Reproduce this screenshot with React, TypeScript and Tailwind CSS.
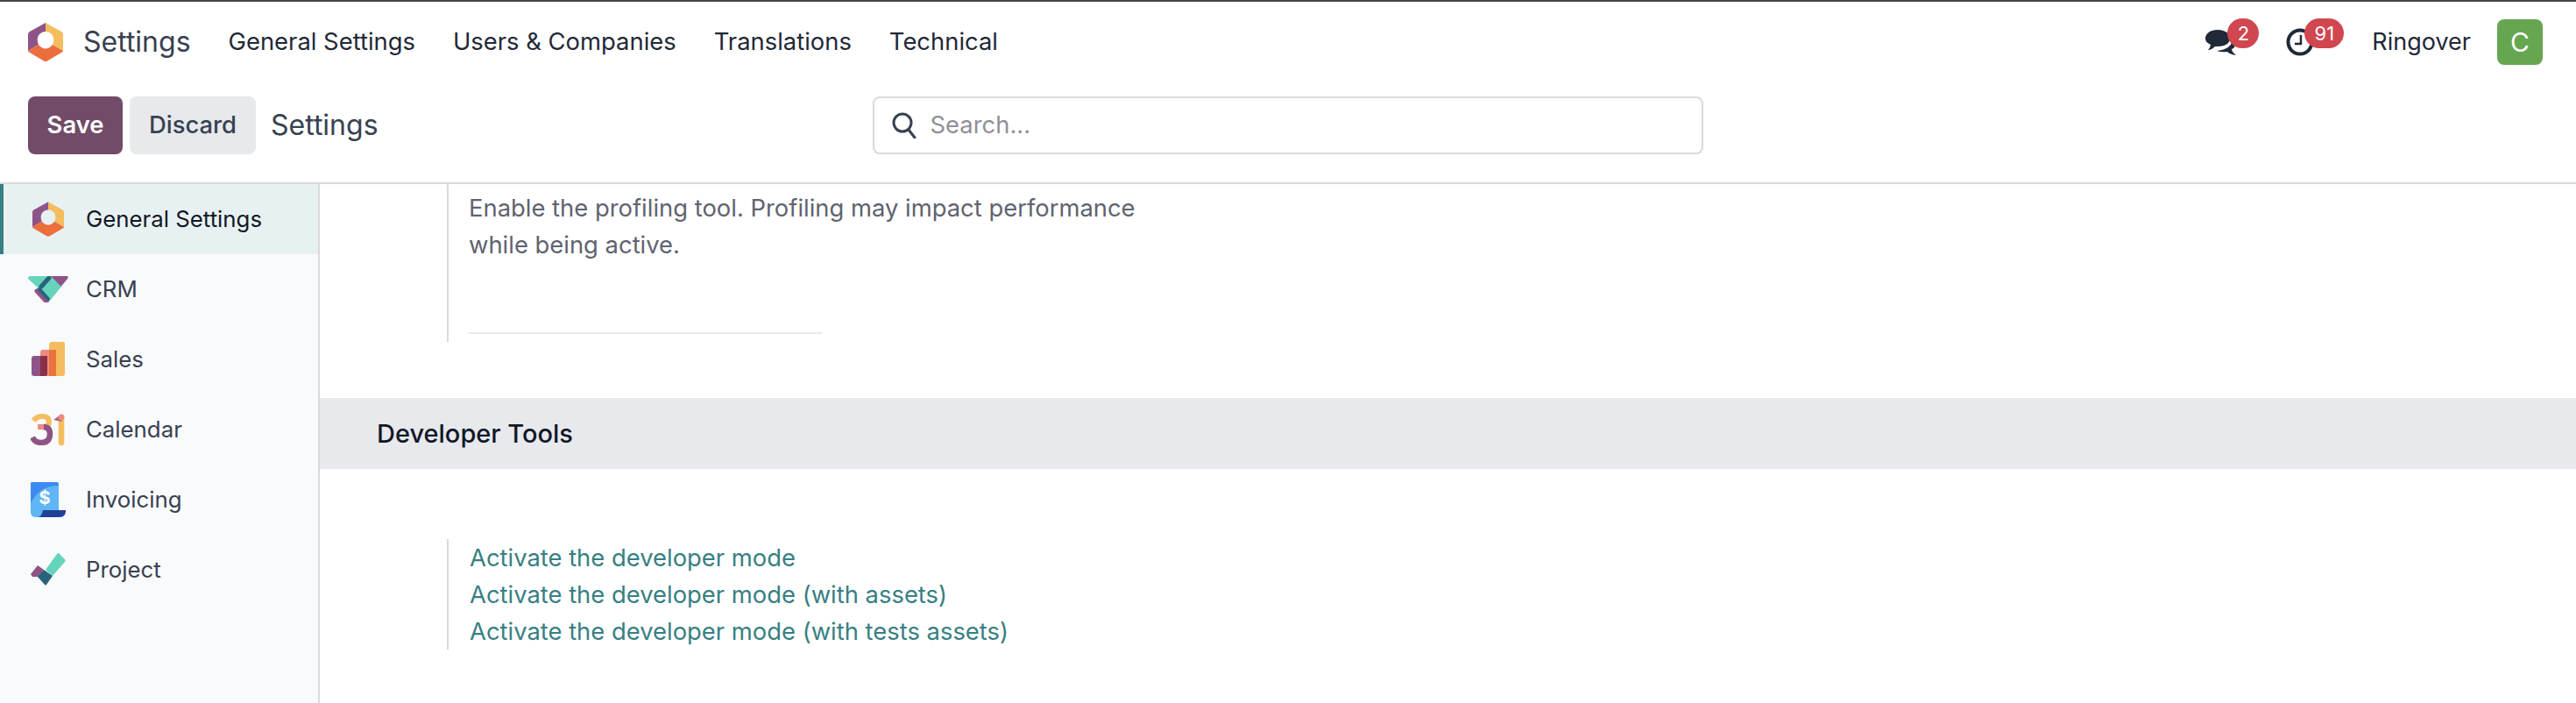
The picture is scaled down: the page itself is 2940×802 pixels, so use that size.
const navLinks = ['General Settings', 'Users & Companies', 'Translations', 'Technical'];

function SettingsIcon({ className }: { className: string }) {
  return (
    <svg viewBox="0 0 40 44" className={className}>
      <path d="M20 0 L2 10 Q0 11 0 13 V32 L12 25 Q9 18 13 13 Q16 10 20 10 Z" fill="#8f5487" />
      <path d="M20 0 L38 10 Q40 11 40 13 V32 L28 25 Q31 18 27 13 Q24 10 20 10 Z" fill="#f4bd5f" />
      <path d="M0 32 L12 25 Q20 34 28 25 L40 32 Q40 33 38 34 L22 43.5 Q20 44.5 18 43.5 L2 34 Q0 33 0 32 Z" fill="#eb6e3c" />
    </svg>
  );
}

function CrmIcon() {
  return (
    <svg viewBox="0 0 46 30" className="w-[46px] h-[30px]">
      <path d="M25 0 H44 Q47 0 45 3 L36 14 L25 3 Z" fill="#8f5487" />
      <path d="M0 3 Q0 0 3 0 H26 L38 12 L25 28 Q22 31 19 28 L9 16 L11 13 Z" fill="#66d4bd" />
      <path d="M15 12 L24 2" stroke="#28637c" strokeWidth="5" strokeLinecap="round" />
      <path d="M10 17 L21 29" stroke="#8f5487" strokeWidth="5" strokeLinecap="round" />
      <path d="M13 15 L23 26" stroke="#28637c" strokeWidth="4" strokeLinecap="round" />
    </svg>
  );
}

function SalesIcon() {
  return (
    <svg viewBox="0 0 40 40" className="w-[40px] h-[40px]">
      <path d="M24 0 H37 Q39 0 39 2 V36 Q39 39 36 39 H21 V3 Q21 0 24 0 Z" fill="#f4bd5f" />
      <path d="M14 9 H29 V39 H11 V12 Q11 9 14 9 Z" fill="#ee8a80" />
      <rect x="21" y="9" width="8" height="30" fill="#e8743c" />
      <path d="M4 16 H19 V36 Q19 39 16 39 H4 Q1 39 1 36 V19 Q1 16 4 16 Z" fill="#8f5487" />
      <path d="M11 16 H19 V36 Q19 39 16 39 H11 Z" fill="#8a3048" />
    </svg>
  );
}

function CalendarIcon() {
  return (
    <svg viewBox="0 0 40 36" className="w-[40px] h-[36px]">
      <path d="M3 8 Q7 3 13 3 Q21 3 21 9 Q21 15 14 15" fill="none" stroke="#f4bd5f" strokeWidth="6" />
      <path d="M14 15 Q22 15 22 23 Q22 33 12 33 Q5 33 2 27" fill="none" stroke="#8f5487" strokeWidth="6.5" />
      <path d="M8 15 H15" stroke="#ee8a80" strokeWidth="6" />
      <path d="M35 5 V33" stroke="#f4bd5f" strokeWidth="6.5" strokeLinecap="round" />
      <path d="M26 7 L33 2 Q38 0 38 4 L35 9 Z" fill="#b0647f" />
      <circle cx="35" cy="4" r="3.5" fill="#ee8a80" />
    </svg>
  );
}

function InvoicingIcon() {
  return (
    <svg viewBox="0 0 40 40" className="w-[40px] h-[40px]">
      <path d="M2 0 H29 Q32 0 32 3 V32 L10 40 H6 Q0 40 0 34 V2 Q0 0 2 0 Z" fill="#5fb5f5" />
      <path d="M0 24 V2 Q0 0 2 0 H29 Q32 0 32 3 V4 Q10 4 0 24 Z" fill="#3e8bf0" />
      <path d="M14 32 H40 V34 Q39 40 33 40 H8 Q13 39 14 32 Z" fill="#1f4198" />
      <text x="16" y="25" textAnchor="middle" fill="#fff" fontSize="20" fontWeight="700" fontFamily="Inter, sans-serif">$</text>
    </svg>
  );
}

function ProjectIcon() {
  return (
    <svg viewBox="0 0 40 38" className="w-[40px] h-[38px]">
      <path d="M32 0 L39 7 Q40 9 39 10 L25 26 L17 19 L30 1 Q31 0 32 0 Z" fill="#66d4bd" />
      <path d="M0 24 L8 14 L15 19 L9 27 L2 27 Z" fill="#8f5487" />
      <path d="M8 27 L15 19 L25 26 L18 36 Q17 37 16 36 Z" fill="#28637c" />
    </svg>
  );
}

function ChatIcon() {
  return (
    <svg viewBox="0 0 35 30" className="w-[35px] h-[30px]">
      <path d="M14 0 C22 0 28 4 28 10 C28 16 22 19 14 19 Q12 19 11 19 Q7 23 3 23 Q6 20 6 17 C2 15 0 13 0 10 C0 4 6 0 14 0 Z" fill="#1f2937" />
      <path d="M30 10 C33 12 35 14 34 18 Q33 21 30 22 Q30 25 35 29 Q28 28 25 25 Q18 26 13 24 Q24 23 29 17 Q31 13 30 10 Z" fill="#1f2937" />
    </svg>
  );
}

function ClockIcon() {
  return (
    <svg viewBox="0 0 32 32" className="w-[32px] h-[32px]">
      <circle cx="16" cy="16" r="13.5" fill="none" stroke="#1f2937" strokeWidth="4" />
      <path d="M17 8 V18 H10" fill="none" stroke="#1f2937" strokeWidth="2.5" />
    </svg>
  );
}

function Badge({ children, className }: { children: React.ReactNode; className: string }) {
  return (
    <span className={`absolute h-[34px] rounded-full bg-[#d0474f] text-white text-[22px] flex items-center justify-center ${className}`}>
      {children}
    </span>
  );
}

function SidebarItem({ icon, label, active }: { icon: React.ReactNode; label: string; active?: boolean }) {
  return (
    <div
      className={`h-[80px] flex items-center text-[25.8px] ${
        active ? 'bg-[#e8f1f2] text-[#111827] border-l-4 border-[#377f83] pl-[28px]' : 'pl-[32px] text-[#374151]'
      }`}
    >
      <div className="w-[46px] flex items-center justify-center">{icon}</div>
      <span className="ml-[20px]">{label}</span>
    </div>
  );
}

export default function App() {
  return (
    <div className="h-[802px] flex flex-col bg-white overflow-hidden font-['Inter',sans-serif] text-[27.4px] text-[#374151]">
      <div className="h-[2px] bg-[#444444]" />

      {/* Nav */}
      <div className="h-[92px] flex items-center pl-[32px] pr-[38px]">
        <SettingsIcon className="w-[40px] h-[44px]" />
        <span className="ml-[23px] text-[32px]">Settings</span>
        <div className="ml-[43px] flex gap-[43px] text-[#1f2937]">
          {navLinks.map((link) => (
            <span key={link}>{link}</span>
          ))}
        </div>
        <div className="ml-auto flex items-center text-[#1f2937]">
          <div className="relative w-[35px] h-[30px] mt-[2px]">
            <ChatIcon />
            <Badge className="left-[25px] w-[36px] top-[-13px]">2</Badge>
          </div>
          <div className="relative w-[32px] h-[32px] ml-[57px]">
            <ClockIcon />
            <Badge className="left-[21px] w-[45px] top-[-11px]">91</Badge>
          </div>
          <span className="ml-[66px] text-[27px]">Ringover</span>
          <div className="ml-[30px] w-[52px] h-[52px] rounded-lg bg-[#66a650] text-white flex items-center justify-center text-[30px]">
            C
          </div>
        </div>
      </div>

      {/* Control panel */}
      <div className="h-[116px] pt-[16px] border-b-2 border-[#d8dadd] pl-[32px] flex items-start">
        <button className="w-[108px] h-[66px] rounded-lg bg-[#714b67] text-white font-semibold">Save</button>
        <button className="ml-[8px] w-[144px] h-[66px] rounded-lg bg-[#e7e9ed] text-[#374151] font-medium">Discard</button>
        <span className="ml-[17px] h-[66px] flex items-center text-[32px]">Settings</span>
        <div className="ml-[564px] w-[948px] h-[66px] rounded-lg border-2 border-[#d8dadd] flex items-center pl-[20px]">
          <svg viewBox="0 0 28 30" className="w-[28px] h-[30px]" fill="none" stroke="#374151" strokeWidth="3">
            <circle cx="12" cy="12" r="10" />
            <path d="M19 20 L26 29" strokeLinecap="round" />
          </svg>
          <span className="ml-[16px] text-[#8f8f99]">Search...</span>
        </div>
      </div>

      <div className="flex-1 flex min-h-0">
        {/* Sidebar */}
        <div className="w-[365px] shrink-0 bg-[#f9fafb] border-r-2 border-[#d8dadd]">
          <SidebarItem active icon={<SettingsIcon className="w-[36px] h-[40px]" />} label="General Settings" />
          <SidebarItem icon={<CrmIcon />} label="CRM" />
          <SidebarItem icon={<SalesIcon />} label="Sales" />
          <SidebarItem icon={<CalendarIcon />} label="Calendar" />
          <SidebarItem icon={<InvoicingIcon />} label="Invoicing" />
          <SidebarItem icon={<ProjectIcon />} label="Project" />
        </div>

        {/* Content */}
        <div className="flex-1 min-w-0">
          <div className="ml-[145px] pl-[23px] border-l-2 border-[#d8dadd] pt-[6px] pb-[9px] leading-[42px] text-[#5f636f]">
            <p className="w-[780px]">Enable the profiling tool. Profiling may impact performance while being active.</p>
            <div className="mt-[79px] w-[403px] h-[2px] bg-[#e7e9ed]" />
          </div>

          <div className="mt-[64px] h-[81px] bg-[#e7e9ed] pl-[65px] flex items-center font-medium text-[29px] text-[#111827]">
            Developer Tools
          </div>

          <div className="mt-[80px] ml-[145px] pl-[24px] border-l-2 border-[#d8dadd] leading-[42px] text-[#377f83]">
            <p>Activate the developer mode</p>
            <p>Activate the developer mode (with assets)</p>
            <p>Activate the developer mode (with tests assets)</p>
          </div>
        </div>
      </div>
    </div>
  );
}
